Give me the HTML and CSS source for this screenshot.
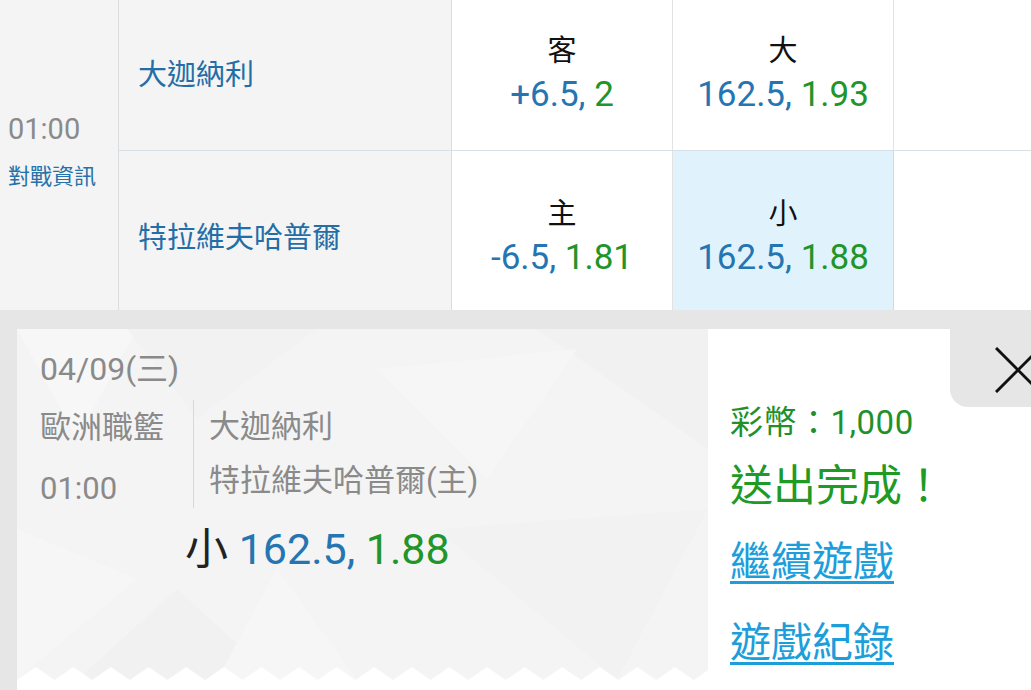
FILE: index.html
```html
<!DOCTYPE html>
<html lang="zh-Hant">
<head>
<meta charset="utf-8">
<title>投注完成</title>
<link rel="stylesheet" href="styles.css">
</head>
<body>
<div class="board">
  <div class="time-cell">
    <div class="time">01:00</div>
    <div class="info">對戰資訊</div>
  </div>
  <div class="team row1">大迦納利</div>
  <div class="odds row1">
    <div class="lbl">客</div>
    <div class="val"><span class="b">+6.5,</span> <span class="g">2</span></div>
  </div>
  <div class="odds row1">
    <div class="lbl">大</div>
    <div class="val"><span class="b">162.5,</span> <span class="g">1.93</span></div>
  </div>
  <div class="blank row1"></div>

  <div class="team">特拉維夫哈普爾</div>
  <div class="odds">
    <div class="lbl">主</div>
    <div class="val"><span class="b">-6.5,</span> <span class="g">1.81</span></div>
  </div>
  <div class="odds selected">
    <div class="lbl">小</div>
    <div class="val"><span class="b">162.5,</span> <span class="g">1.88</span></div>
  </div>
  <div class="blank"></div>
</div>

<div class="sheet">
  <div class="ticket">
    <svg class="pattern" width="691" height="351" viewBox="0 0 691 351" aria-hidden="true">
      <polygon points="0,0 120,0 60,110" fill="#f7f7f7"/>
      <polygon points="110,0 300,0 180,90" fill="#f2f2f2"/>
      <polygon points="520,0 691,0 691,120" fill="#f1f1f1"/>
      <polygon points="360,40 560,20 470,150" fill="#f6f6f6"/>
      <polygon points="160,260 60,351 260,351" fill="#f1f1f1"/>
      <polygon points="420,200 691,180 600,351" fill="#f2f2f2"/>
      <polygon points="0,200 120,250 0,351" fill="#f6f6f6"/>
      <polygon points="260,240 340,351 200,351" fill="#f6f6f6"/>
    </svg>
    <div class="ticket-body">
      <div class="date">04/09(三)</div>
      <div class="match">
        <div class="meta">
          <div class="league">歐洲職籃</div>
          <div class="mtime">01:00</div>
        </div>
        <div class="teams">
          <div>大迦納利</div>
          <div>特拉維夫哈普爾(主)</div>
        </div>
      </div>
      <div class="pick"><span class="pk">小</span> <span class="b">162.5,</span> <span class="g">1.88</span></div>
    </div>
    <svg class="zigzag" width="691" height="13" viewBox="0 0 691 13" aria-hidden="true">
      <defs>
        <pattern id="zz" x="0" y="0" width="37.6" height="13" patternUnits="userSpaceOnUse">
          <polygon points="0,13 18.8,0 37.6,13" fill="#ffffff"/>
        </pattern>
      </defs>
      <rect x="0" y="0" width="691" height="13" fill="url(#zz)"/>
    </svg>
  </div>
  <div class="result">
    <div class="coins">彩幣：1,000</div>
    <div class="done">送出完成！</div>
    <a class="link first" href="#">繼續遊戲</a>
    <a class="link" href="#">遊戲紀錄</a>
  </div>
  <button class="close" type="button" aria-label="關閉">
    <svg width="46" height="46" viewBox="0 0 46 46" aria-hidden="true">
      <path d="M1 1 L45 45 M45 1 L1 45" stroke="#111" stroke-width="3" fill="none"/>
    </svg>
  </button>
</div>
</body>
</html>
```
FILE: styles.css
```css
html, body {
  margin: 0;
  padding: 0;
  overflow: hidden;
}
body {
  width: 1031px;
  height: 690px;
  background: #e6e6e6;
  font-family: Roboto, "Noto Sans CJK TC", sans-serif;
}
.board {
  display: grid;
  grid-template-columns: 119px 333px 221px 221px 1fr;
  grid-template-rows: 151px 159px;
  background: #fff;
}
.board > div {
  box-sizing: border-box;
}
.time-cell {
  grid-row: 1 / span 2;
  background: #f4f4f4;
  border-right: 1px solid #dcdcdc;
  display: flex;
  flex-direction: column;
  justify-content: center;
  padding: 0 0 0 8px;
}
.time {
  font-size: 29px;
  line-height: 34px;
  color: #8a8a8a;
  margin-top: -5px;
}
.info {
  font-size: 22px;
  line-height: 32px;
  color: #2671a9;
  margin-top: 15px;
}
.row1 {
  border-bottom: 1px solid #d6e0e6;
}
.team {
  background: #f4f4f4;
  border-right: 1px solid #dcdcdc;
  display: flex;
  align-items: center;
  padding-left: 19px;
  font-size: 29px;
  color: #236ea6;
}
.team.row1 {
  padding-bottom: 7px;
}
.team:not(.row1) {
  padding-top: 8px;
}
.odds {
  border-right: 1px solid #e2e2e2;
  display: flex;
  flex-direction: column;
  align-items: center;
  justify-content: center;
}
.odds.row1 {
  padding-bottom: 2px;
}
.odds:not(.row1) {
  padding-top: 12px;
}
.odds.selected {
  background: #e0f3fc;
  border-right: 1px solid #c9dce6;
}
.lbl {
  font-size: 29px;
  line-height: 38px;
  color: #111;
}
.val {
  font-size: 35px;
  line-height: 42px;
  margin-top: 4px;
  white-space: nowrap;
}
.b { color: #2475b1; }
.g { color: #21942a; }

.sheet {
  position: relative;
  margin: 19px 0 0 17px;
  height: 370px;
  background: #fff;
  display: flex;
}
.ticket {
  position: relative;
  width: 691px;
  height: 351px;
  background: #f4f4f4;
  display: flex;
  flex-direction: column;
  flex: none;
}
.pattern {
  position: absolute;
  left: 0;
  top: 0;
}
.ticket-body {
  position: relative;
  flex: 1;
  padding: 20px 0 0 23px;
  color: #8a8a8a;
}
.date {
  font-size: 32px;
  line-height: 40px;
}
.match {
  display: flex;
  align-items: flex-start;
  margin-top: 11px;
}
.meta {
  width: 153px;
  flex: none;
}
.league {
  font-size: 31px;
  line-height: 56px;
}
.mtime {
  font-size: 31px;
  line-height: 56px;
  margin-top: 5px;
}
.teams {
  border-left: 1px solid #d8d8d8;
  padding-left: 15px;
  font-size: 31px;
  line-height: 55px;
}
.teams div {
  margin-top: -1px;
}
.pick {
  margin: 7px 0 0 145px;
  font-size: 43px;
  line-height: 50px;
  white-space: nowrap;
}
.pk { color: #222; }
.zigzag {
  display: block;
  position: relative;
  flex: none;
}
.result {
  display: flex;
  flex-direction: column;
  align-items: flex-start;
  padding: 72px 0 0 22px;
}
.coins {
  font-size: 33px;
  line-height: 44px;
  color: #22902a;
  letter-spacing: 0.5px;
}
.done {
  font-size: 43px;
  line-height: 56px;
  color: #1f9a24;
  margin-top: 13px;
}
.link {
  font-size: 41px;
  line-height: 56px;
  color: #1c9edb;
  text-decoration: underline;
  text-decoration-thickness: 3px;
  text-underline-offset: 5px;
}
.link.first {
  margin-top: 20px;
}
.link + .link {
  margin-top: 25px;
}
.close {
  position: absolute;
  top: 0;
  right: 0;
  width: 81px;
  height: 78px;
  padding: 0;
  border: none;
  background: #e6e6e6;
  border-bottom-left-radius: 18px;
}
.close svg {
  position: absolute;
  left: 45px;
  top: 18px;
}
```
